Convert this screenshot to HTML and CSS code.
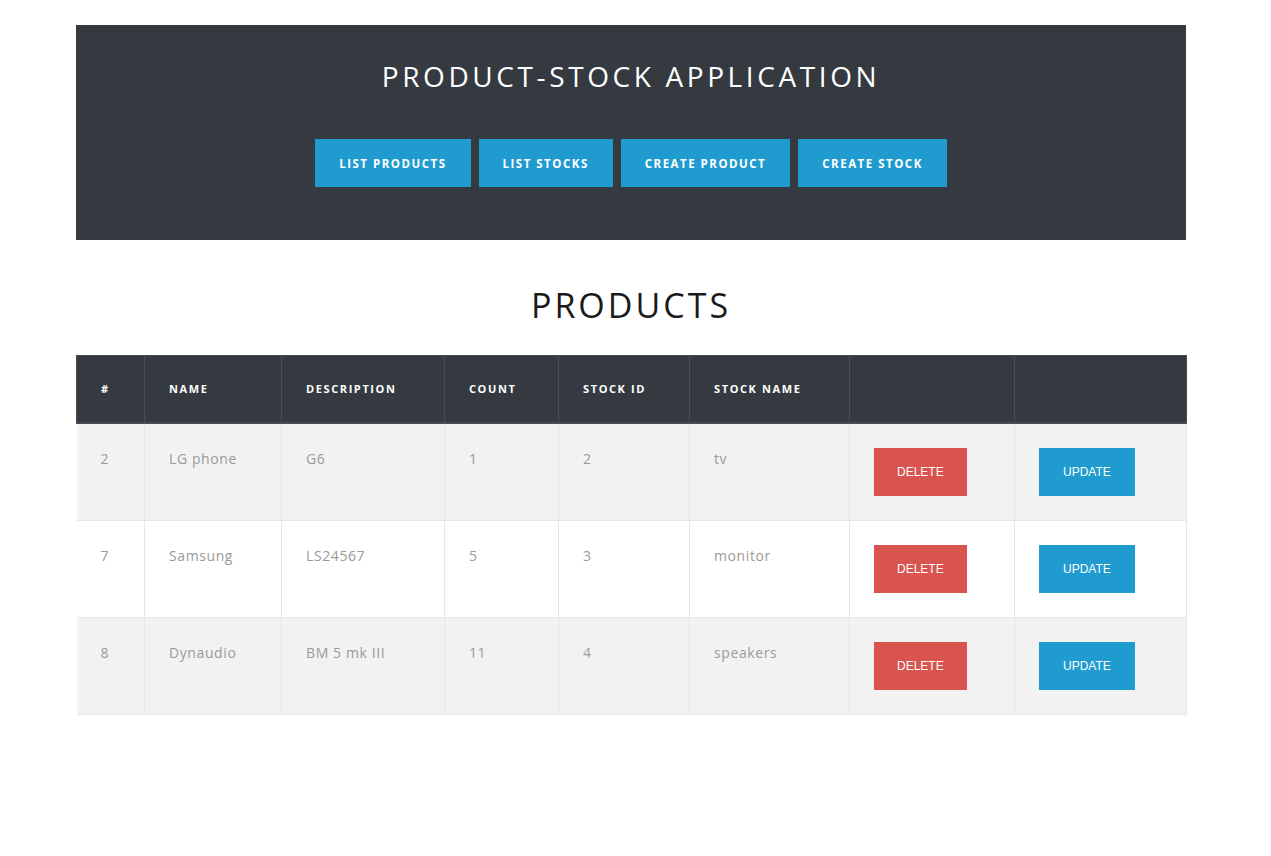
FILE: index.html
```html
<!DOCTYPE html>
<html lang="en">
<head>
<meta charset="utf-8">
<title>Product-Stock Application</title>
<link rel="stylesheet" href="styles.css">
</head>
<body>
<div class="container">
  <header class="jumbo">
    <h1 class="app-title">PRODUCT-STOCK APPLICATION</h1>
    <nav class="nav">
      <a class="btn btn-info nav-btn" href="#">List Products</a>
      <a class="btn btn-info nav-btn" href="#">List Stocks</a>
      <a class="btn btn-info nav-btn" href="#">Create Product</a>
      <a class="btn btn-info nav-btn" href="#">Create Stock</a>
    </nav>
  </header>

  <h2 class="page-title">PRODUCTS</h2>

  <table class="table">
    <colgroup>
      <col class="c1"><col class="c2"><col class="c3"><col class="c4"><col class="c5"><col class="c6"><col class="c7"><col class="c8">
    </colgroup>
    <thead>
      <tr>
        <th>#</th><th>Name</th><th>Description</th><th>Count</th><th>Stock ID</th><th>Stock Name</th><th></th><th></th>
      </tr>
    </thead>
    <tbody>
      <tr>
        <td>2</td><td>LG phone</td><td>G6</td><td>1</td><td>2</td><td>tv</td>
        <td><button class="btn btn-danger row-btn">Delete</button></td>
        <td><button class="btn btn-info row-btn update-btn">Update</button></td>
      </tr>
      <tr>
        <td>7</td><td>Samsung</td><td>LS24567</td><td>5</td><td>3</td><td>monitor</td>
        <td><button class="btn btn-danger row-btn">Delete</button></td>
        <td><button class="btn btn-info row-btn update-btn">Update</button></td>
      </tr>
      <tr>
        <td>8</td><td>Dynaudio</td><td>BM 5 mk III</td><td>11</td><td>4</td><td>speakers</td>
        <td><button class="btn btn-danger row-btn">Delete</button></td>
        <td><button class="btn btn-info row-btn update-btn">Update</button></td>
      </tr>
    </tbody>
  </table>
</div>
</body>
</html>
```
FILE: styles.css
```css
* { box-sizing: border-box; }
html, body { margin: 0; padding: 0; background: #fff; }
body {
  font-family: "Open Sans", "Noto Sans", sans-serif;
  color: #212529;
}
.container {
  width: 1110px;
  margin: 0 0 0 76px;
  padding-top: 25px;
}
.jumbo {
  background: #343a40;
  height: 215px;
  padding-top: 1px;
  text-align: center;
}
.app-title {
  margin: 30px 0 0;
  font-size: 28px;
  font-weight: 400;
  line-height: 40px;
  letter-spacing: 3.6px;
  color: #fff;
}
.nav {
  display: flex;
  justify-content: center;
  gap: 8px;
  margin-top: 43px;
}
.btn {
  display: inline-flex;
  align-items: center;
  justify-content: center;
  border: 0;
  color: #fff;
  text-decoration: none;
  text-transform: uppercase;
  cursor: pointer;
}
.btn-info { background: #1f9bcf; }
.btn-danger { background: #d9534f; }
.nav-btn {
  height: 48px;
  padding: 0 24px;
  font-size: 11.5px;
  font-weight: 700;
  letter-spacing: 1.5px;
}
.page-title {
  margin: 42px 0 0;
  text-align: center;
  font-size: 34px;
  font-weight: 400;
  line-height: 46px;
  letter-spacing: 3px;
  color: #1a1a1a;
}
.table {
  width: 1110px;
  margin-top: 27px;
  border-collapse: collapse;
  table-layout: fixed;
}
.c1 { width: 68px; }
.c2 { width: 137px; }
.c3 { width: 163px; }
.c4 { width: 114px; }
.c5 { width: 131px; }
.c6 { width: 160px; }
.c7 { width: 165px; }
.c8 { width: 172px; }
.table th {
  background: #343a40;
  color: #fff;
  border: 1px solid #454d55;
  border-bottom: 2px solid #454d55;
  height: 67px;
  padding: 0 24px;
  text-align: left;
  font-size: 11px;
  font-weight: 700;
  letter-spacing: 1.6px;
  text-transform: uppercase;
  vertical-align: middle;
}
.table td {
  border: 1px solid #e6e6e6;
  padding: 24px 24px 24px;
  vertical-align: top;
  font-size: 14px;
  line-height: 22px;
  letter-spacing: 0.6px;
  color: #9a9a9a;
}
.table tbody tr:nth-child(odd) td { background: #f2f2f2; }
.table tbody tr td:first-child { border-left: 0; }
.row-btn {
  height: 48px;
  padding: 0 23px;
  font-family: "Liberation Sans", Arial, sans-serif;
  font-size: 12px;
  letter-spacing: 0;
}
.update-btn { padding: 0 24px; }
```
